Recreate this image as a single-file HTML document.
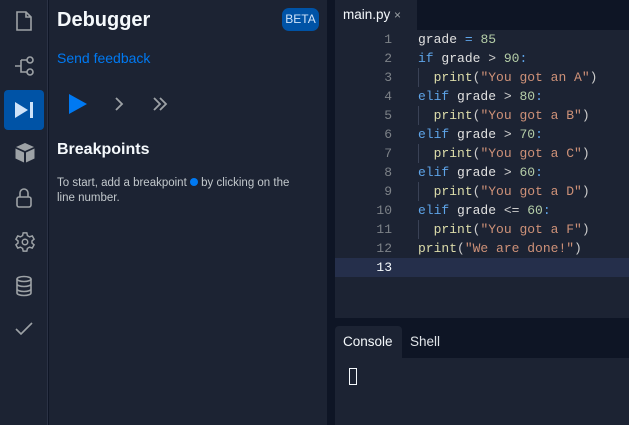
<!DOCTYPE html>
<html><head><style>
*{margin:0;padding:0;box-sizing:border-box}
body{width:629px;height:425px;background:#0e1525;position:relative;overflow:hidden;font-family:"Liberation Sans",sans-serif;color:#f5f9fc}
.abs{position:absolute}
.side{left:0;top:0;width:48px;height:425px;background:#1c2333;border-right:1px solid #2b3245}
.panel{left:49px;top:0;width:278px;height:425px;background:#1c2333}
.ic{position:absolute;left:14px}
.code{font-family:"Liberation Mono",monospace;font-size:13px;line-height:19px;white-space:pre}
.k{color:#5ea4e8}.n{color:#b5cea8}.s{color:#ce9178}.f{color:#dcdcaa}.t{color:#e0e0e0}.p{color:#ccc}
</style></head><body>
<div class="abs side">
<svg class="ic" style="top:10px" width="20" height="22" viewBox="0 0 20 22" fill="none" stroke="#9da2a6" stroke-width="1.6"><path d="M3 2h9l5 5v13H3z M12 2v5h5"/></svg>
<svg class="ic" style="top:55px" width="22" height="22" viewBox="0 0 22 22" fill="none" stroke="#9da2a6" stroke-width="1.6"><path d="M1 11h6M7 5v12h6M7 5h6"/><circle cx="16" cy="5" r="3"/><circle cx="16" cy="17" r="3"/></svg>
<div class="abs" style="left:4px;top:90px;width:40px;height:40px;background:#0053a6;border-radius:4px"></div>
<svg class="abs" style="left:14px;top:101px" width="22" height="18" viewBox="0 0 22 18"><path d="M1 1l13 8-13 8z" fill="#cfe3f9"/><rect x="16" y="1" width="3" height="16" fill="#cfe3f9"/></svg>
<svg class="ic" style="top:142px" width="22" height="22" viewBox="0 0 22 22" fill="#9da2a6"><path d="M11 1l9 4-9 4-9-4z"/><path d="M1.5 6.5l8.5 4v10l-8.5-4z"/><path d="M20.5 6.5l-8.5 4v10l8.5-4z"/></svg>
<svg class="ic" style="top:187px" width="20" height="22" viewBox="0 0 20 22" fill="none" stroke="#9da2a6" stroke-width="1.6"><rect x="3" y="10" width="14" height="10" rx="2"/><path d="M6 10V6a4 4 0 0 1 8 0v4"/></svg>
<svg class="ic" style="top:231px" width="22" height="22" viewBox="0 0 24 24" fill="none" stroke="#9da2a6" stroke-width="1.6"><circle cx="12" cy="12" r="3"/><path d="M10 2h4l.6 3 2.4 1.4 2.9-1 2 3.5-2.3 2v2.2l2.3 2-2 3.5-2.9-1-2.4 1.4-.6 3h-4l-.6-3-2.4-1.4-2.9 1-2-3.5 2.3-2v-2.2l-2.3-2 2-3.5 2.9 1L9.4 5z"/></svg>
<svg class="ic" style="top:275px" width="20" height="22" viewBox="0 0 20 22" fill="none" stroke="#9da2a6" stroke-width="1.6"><ellipse cx="10" cy="4" rx="7" ry="2.5"/><path d="M3 4v14c0 1.4 3 2.5 7 2.5s7-1.1 7-2.5V4M3 9c0 1.4 3 2.5 7 2.5s7-1.1 7-2.5M3 14c0 1.4 3 2.5 7 2.5s7-1.1 7-2.5"/></svg>
<svg class="ic" style="top:320px" width="20" height="18" viewBox="0 0 20 18" fill="none" stroke="#9da2a6" stroke-width="1.6"><path d="M2 9l5 5L18 3"/></svg>
</div>
<div class="abs panel">
<div class="abs" style="left:8px;top:9px;font-size:20px;font-weight:bold">Debugger</div>
<div class="abs" style="left:233px;top:8px;width:37px;height:23px;background:#0053a6;border-radius:7px;font-size:12px;line-height:23px;text-align:center;color:#cfe3f9">BETA</div>
<div class="abs" style="left:8px;top:50px;font-size:14px;color:#0079f2">Send feedback</div>
<svg class="abs" style="left:20px;top:94px" width="20" height="20" viewBox="0 0 20 20"><path d="M0 0l18 10L0 20z" fill="#0079f2"/></svg>
<svg class="abs" style="left:65px;top:96px" width="10" height="16" viewBox="0 0 10 16" fill="none" stroke="#9da2a6" stroke-width="1.8"><path d="M2 2l6 6-6 6"/></svg>
<svg class="abs" style="left:103px;top:96px" width="16" height="16" viewBox="0 0 16 16" fill="none" stroke="#9da2a6" stroke-width="1.8"><path d="M2 2l6 6-6 6M8 2l6 6-6 6"/></svg>
<div class="abs" style="left:8px;top:141px;font-size:16px;font-weight:bold">Breakpoints</div>
<div class="abs" style="left:8px;top:176px;width:250px;font-size:11.5px;line-height:15px;color:#c2c8cc">To start, add a breakpoint <span style="display:inline-block;width:8px;height:8px;border-radius:50%;background:#0079f2"></span> by clicking on the line number.</div>
</div>
<div class="abs" style="left:335px;top:0;width:82px;height:30px;background:#1c2333;font-size:13.5px;line-height:30px;padding-left:8px">main.py <span style="color:#9da2a6;font-size:12px">×</span></div>
<div class="abs" style="left:335px;top:30px;width:294px;height:288px;background:#1c2333"></div>
<div class="abs" style="left:335px;top:258px;width:294px;height:19px;background:#252f4b"></div>
<div class="abs code" style="left:335px;top:30px;width:57px;text-align:right;color:#7d8288">1
2
3
4
5
6
7
8
9
10
11
12
<span style="color:#f5f9fc">13</span></div>
<div class="abs code t" style="left:418px;top:30px">grade <span class="k">=</span> <span class="n">85</span>
<span class="k">if</span> grade <span class="p">&gt;</span> <span class="n">90</span><span class="k">:</span>
  <span class="f">print</span><span class="p">(</span><span class="s">"You got an A"</span><span class="p">)</span>
<span class="k">elif</span> grade <span class="p">&gt;</span> <span class="n">80</span><span class="k">:</span>
  <span class="f">print</span><span class="p">(</span><span class="s">"You got a B"</span><span class="p">)</span>
<span class="k">elif</span> grade <span class="p">&gt;</span> <span class="n">70</span><span class="k">:</span>
  <span class="f">print</span><span class="p">(</span><span class="s">"You got a C"</span><span class="p">)</span>
<span class="k">elif</span> grade <span class="p">&gt;</span> <span class="n">60</span><span class="k">:</span>
  <span class="f">print</span><span class="p">(</span><span class="s">"You got a D"</span><span class="p">)</span>
<span class="k">elif</span> grade <span class="p">&lt;=</span> <span class="n">60</span><span class="k">:</span>
  <span class="f">print</span><span class="p">(</span><span class="s">"You got a F"</span><span class="p">)</span>
<span class="f">print</span><span class="p">(</span><span class="s">"We are done!"</span><span class="p">)</span></div>
<div class="abs" style="left:418px;top:68px;width:1px;height:19px;background:#3a4256"></div>
<div class="abs" style="left:418px;top:106px;width:1px;height:19px;background:#3a4256"></div>
<div class="abs" style="left:418px;top:144px;width:1px;height:19px;background:#3a4256"></div>
<div class="abs" style="left:418px;top:182px;width:1px;height:19px;background:#3a4256"></div>
<div class="abs" style="left:418px;top:220px;width:1px;height:19px;background:#3a4256"></div>
<div class="abs" style="left:335px;top:326px;width:67px;height:32px;background:#1c2333;border-radius:4px 4px 0 0;font-size:13.5px;line-height:32px;padding-left:8px">Console</div>
<div class="abs" style="left:410px;top:326px;font-size:13.5px;line-height:32px;color:#e0e4e8">Shell</div>
<div class="abs" style="left:335px;top:358px;width:294px;height:67px;background:#1c2333"></div>
<div class="abs" style="left:349px;top:368px;width:8px;height:17px;border:1.5px solid #f5f9fc"></div>
</body></html>
